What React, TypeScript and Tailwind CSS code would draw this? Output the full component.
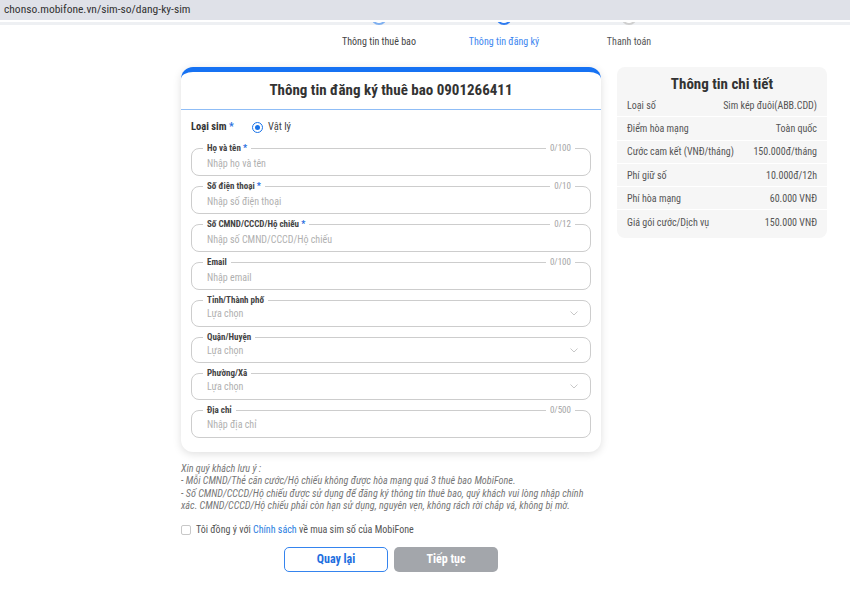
import React from 'react';

type Field = {
  label: string;
  required?: boolean;
  placeholder: string;
  counter?: string;
  select?: boolean;
};

const fields: Field[] = [
  { label: 'Họ và tên', required: true, placeholder: 'Nhập họ và tên', counter: '0/100' },
  { label: 'Số điện thoại', required: true, placeholder: 'Nhập số điện thoại', counter: '0/10' },
  { label: 'Số CMND/CCCD/Hộ chiếu', required: true, placeholder: 'Nhập số CMND/CCCD/Hộ chiếu', counter: '0/12' },
  { label: 'Email', placeholder: 'Nhập email', counter: '0/100' },
  { label: 'Tỉnh/Thành phố', placeholder: 'Lựa chọn', select: true },
  { label: 'Quận/Huyện', placeholder: 'Lựa chọn', select: true },
  { label: 'Phường/Xã', placeholder: 'Lựa chọn', select: true },
  { label: 'Địa chỉ', placeholder: 'Nhập địa chỉ', counter: '0/500' },
];

const details = [
  ['Loại số', 'Sim kép đuôi(ABB.CDD)'],
  ['Điểm hòa mạng', 'Toàn quốc'],
  ['Cước cam kết (VNĐ/tháng)', '150.000đ/tháng'],
  ['Phí giữ số', '10.000đ/12h'],
  ['Phí hòa mạng', '60.000 VNĐ'],
  ['Giá gói cước/Dịch vụ', '150.000 VNĐ'],
];

const steps = [
  { label: 'Thông tin thuê bao', circle: 'border-[#7fb0f0]', text: 'text-[#444]' },
  { label: 'Thông tin đăng ký', circle: 'border-[#2f7cf0]', text: 'text-[#3d86f0]' },
  { label: 'Thanh toán', circle: 'border-[#cfcfcf]', text: 'text-[#555]' },
];

const OutlinedField: React.FC<{ field: Field }> = ({ field }) => (
  <div className="pt-[6px]">
    <div
      className={`relative rounded-lg border border-[#cdcdcd] pl-[15px] pr-[12px] flex items-center justify-between ${
        field.select ? 'h-[26.5px] pt-[1px]' : 'h-[28px] pt-[2px]'
      }`}
    >
      <span className="absolute left-[11px] top-[-7px] bg-white px-[4px] text-[9px] leading-[12px] font-bold text-[#444]">
        {field.label}
        {field.required && <span className="text-[#2a6fe0]"> *</span>}
      </span>
      {field.counter && (
        <span className="absolute right-[15px] top-[-7px] bg-white px-[4px] text-[9px] leading-[12px] text-[#a5a5a5]">
          {field.counter}
        </span>
      )}
      <span className="text-[10px] text-[#b0b0b0]">{field.placeholder}</span>
      {field.select && (
        <svg width="8" height="5" viewBox="0 0 8 5">
          <path d="M0.5 0.5 L4 4 L7.5 0.5" fill="none" stroke="#c2c2c2" strokeWidth="0.9" />
        </svg>
      )}
    </div>
  </div>
);

export default function App() {
  return (
    <div className="w-[850px] h-[590px] overflow-hidden bg-white font-['Roboto_Condensed','Roboto',sans-serif]">
      <div className="h-[20px] bg-[#dfe1e8] flex items-center pl-[4px] text-[11.5px] text-[#333]">
        chonso.mobifone.vn/sim-so/dang-ky-sim
      </div>
      <div className="mt-[2px] h-[3px] bg-[#eef0f3] overflow-hidden">
        <div className="ml-[181px] w-[646px] flex justify-center">
          {steps.map((s) => (
            <div key={s.label} className="w-[125px] flex justify-center">
              <div className={`w-[16px] h-[16px] -mt-[13px] rounded-full border-2 bg-white ${s.circle}`} />
            </div>
          ))}
        </div>
      </div>

      <div className="ml-[181px] w-[646px]">
        <div className="flex justify-center mt-[10px]">
          {steps.map((s) => (
            <div key={s.label} className={`w-[125px] text-center text-[10px] leading-[14px] ${s.text}`}>
              {s.label}
            </div>
          ))}
        </div>

        <div className="mt-[18px] flex items-start gap-[16px]">
          <div className="w-[420px]">
            <div className="rounded-xl border-t-[5px] border-[#1672f3] bg-white shadow-[0_2px_8px_rgba(0,0,0,0.13)]">
              <div className="h-[38px] flex items-center justify-center border-b border-[#8fbdf6] text-[15px] font-bold text-[#333]">
                Thông tin đăng ký thuê bao 0901266411
              </div>
              <div className="px-[10px] pb-[14px]">
                <div className="flex items-center h-[14px] mt-[10px] mb-[8px]">
                  <span className="w-[61px] text-[10.5px] font-bold text-[#333]">
                    Loại sim <span className="text-[#2a6fe0]">*</span>
                  </span>
                  <span className="w-[11px] h-[11px] rounded-full border-[1.5px] border-[#1a73e8] flex items-center justify-center">
                    <span className="w-[5px] h-[5px] rounded-full bg-[#1a73e8]" />
                  </span>
                  <span className="ml-[5px] text-[10.5px] text-[#444]">Vật lý</span>
                </div>
                <div className="flex flex-col gap-[4px]">
                  {fields.map((f) => (
                    <OutlinedField key={f.label} field={f} />
                  ))}
                </div>
              </div>
            </div>

            <div className="mt-[11px] text-[10.2px] leading-[12.6px] italic text-[#777]">
              <p>Xin quý khách lưu ý :</p>
              <p>- Mỗi CMND/Thẻ căn cước/Hộ chiếu không được hòa mạng quá 3 thuê bao MobiFone.</p>
              <p>
                - Số CMND/CCCD/Hộ chiếu được sử dụng để đăng ký thông tin thuê bao, quý khách vui lòng nhập chính
                <br />
                xác. CMND/CCCD/Hộ chiếu phải còn hạn sử dụng, nguyên vẹn, không rách rời chắp vá, không bị mờ.
              </p>
            </div>

            <div className="mt-[11px] h-[12px] flex items-center">
              <span className="w-[10px] h-[10px] rounded-[2px] border border-[#c8c8c8] bg-white" />
              <span className="ml-[5px] text-[10px] text-[#555]">
                Tôi đồng ý với <span className="text-[#2a7de1]">Chính sách</span> về mua sim số của MobiFone
              </span>
            </div>

            <div className="mt-[11px] flex justify-center gap-[6px]">
              <button className="w-[104px] h-[25px] rounded-[5px] border-[1.5px] border-[#3584ee] bg-white text-[12px] font-bold text-[#1f6fe0]">
                Quay lại
              </button>
              <button className="w-[104px] h-[25px] rounded-[5px] bg-[#a3a6ab] text-[12px] font-bold text-white">
                Tiếp tục
              </button>
            </div>
          </div>

          <div className="w-[210px] rounded-lg bg-[#f6f6f6] pt-[8px] pb-[4px]">
            <div className="text-center text-[15px] leading-[19px] font-bold text-[#333]">Thông tin chi tiết</div>
            {details.map(([k, v], i) => (
              <div
                key={k}
                className={`h-[23.3px] px-[10px] flex items-center justify-between text-[10px] text-[#555] ${
                  i < details.length - 1 ? 'border-b border-white' : ''
                }`}
              >
                <span>{k}</span>
                <span>{v}</span>
              </div>
            ))}
          </div>
        </div>
      </div>
    </div>
  );
}
